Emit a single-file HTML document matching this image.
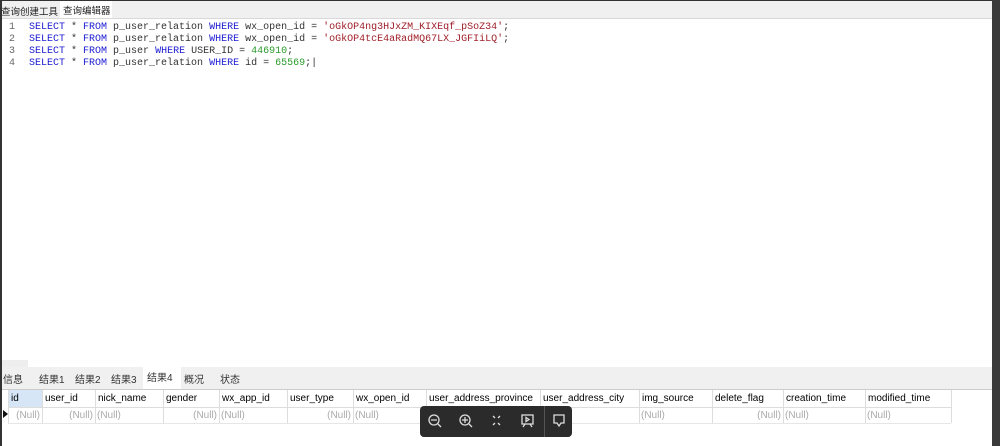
<!DOCTYPE html><html><head><meta charset="utf-8"><style>
body{margin:0;width:1000px;height:446px;overflow:hidden;background:#fff;position:relative;font-family:"Liberation Sans","Noto Sans CJK SC",sans-serif;}
.a{position:absolute}
.code{font-family:"Liberation Mono",monospace;font-size:10px;line-height:12px;color:#333;white-space:pre}
.k{color:#1a1ad0}.s{color:#a0202a}.n{color:#2a9a2a}
.tab{position:absolute;top:371px;font-size:10px;color:#333}
.h,.d{position:absolute;font-size:10px;white-space:nowrap}
.d{color:#aaa}
</style></head><body>
<div class="a" style="left:0;top:0;width:1000px;height:1px;background:#333"></div>
<div class="a" style="left:0;top:1px;width:992px;height:17px;background:#f0f0f0;border-bottom:1px solid #d8d8d8"></div>
<div class="a" style="left:60px;top:1px;width:52px;height:17px;background:#fff"></div>
<div class="a" style="left:1px;top:4px;font-size:9.5px;color:#222">查询创建工具</div>
<div class="a" style="left:63px;top:3px;font-size:9.5px;color:#222">查询编辑器</div>
<div class="a" style="left:0;top:0;width:2px;height:446px;background:#333"></div>
<div class="a" style="left:992px;top:0;width:8px;height:446px;background:#3a3a3a"></div>
<div class="a code" style="left:9px;top:22px;color:#666">1
2
3
4</div>
<div class="a code" style="left:29px;top:22px"><span class="k">SELECT</span> * <span class="k">FROM</span> p_user_relation <span class="k">WHERE</span> wx_open_id = <span class="s">'oGkOP4ng3HJxZM_KIXEqf_pSoZ34'</span>;
<span class="k">SELECT</span> * <span class="k">FROM</span> p_user_relation <span class="k">WHERE</span> wx_open_id = <span class="s">'oGkOP4tcE4aRadMQ67LX_JGFIiLQ'</span>;
<span class="k">SELECT</span> * <span class="k">FROM</span> p_user <span class="k">WHERE</span> USER_ID = <span class="n">446910</span>;
<span class="k">SELECT</span> * <span class="k">FROM</span> p_user_relation <span class="k">WHERE</span> id = <span class="n">65569</span>;|</div>
<div class="a" style="left:2px;top:360px;width:26px;height:7px;background:#eee"></div>
<div class="a" style="left:2px;top:367px;width:990px;height:22px;background:#f0f0f0;border-bottom:1px solid #ccc"></div>
<div class="a" style="left:143px;top:367px;width:38px;height:22px;background:#fff"></div>
<div class="tab" style="left:3px">信息</div><div class="tab" style="left:39px">结果1</div><div class="tab" style="left:75px">结果2</div><div class="tab" style="left:111px">结果3</div><div class="tab" style="left:147px;top:369px">结果4</div><div class="tab" style="left:184px">概况</div><div class="tab" style="left:220px">状态</div>
<div class="a" style="left:8px;top:390px;width:943px;height:33px;border-right:1px solid #ddd"></div>
<div class="a" style="left:8px;top:407px;width:943px;height:1px;background:#ddd"></div>
<div class="a" style="left:8px;top:423px;width:943px;height:1px;background:#e6e6e6"></div>
<div class="a" style="left:8px;top:390px;width:34px;height:17px;background:#d6e6f6"></div>
<div class="a" style="left:3px;top:410px;width:0;height:0;border-top:4px solid transparent;border-bottom:4px solid transparent;border-left:5px solid #111"></div>
<div id="cols"></div>
<script>
var c=[[8,"id","r"],[42,"user_id","r"],[95,"nick_name","l"],[163,"gender","r"],[219,"wx_app_id","l"],[287,"user_type","r"],[353,"wx_open_id","l"],[426,"user_address_province",""],[540,"user_address_city",""],[639,"img_source","l"],[712,"delete_flag","r"],[783,"creation_time","l"],[865,"modified_time","l"]];
var h="";for(var i=0;i<c.length;i++){var x=c[i][0],w=(i<c.length-1?c[i+1][0]:951)-x;
h+='<div class="a" style="left:'+x+'px;top:390px;width:1px;height:33px;background:#ddd"></div>';
h+='<div class="h" style="left:'+(x+3)+'px;top:393px">'+c[i][1]+'</div>';
if(c[i][2]=="r")h+='<div class="d" style="left:'+x+'px;width:'+(w-2)+'px;text-align:right;top:410px">(Null)</div>';
if(c[i][2]=="l")h+='<div class="d" style="left:'+(x+2)+'px;top:410px">(Null)</div>';}
document.getElementById("cols").innerHTML=h;
</script>
<div class="a" style="left:420px;top:406px;width:152px;height:31px;background:#2b2b2b;border-radius:4px"></div>
<div class="a" style="left:544px;top:406px;width:1px;height:31px;background:#555"></div>
<svg class="a" style="left:420px;top:406px" width="152" height="31" fill="none" stroke="#ddd" stroke-width="1.3">
<circle cx="14" cy="14" r="5"/><path d="M11 14h6M18 18l3 3"/>
<circle cx="45" cy="14" r="5"/><path d="M42 14h6M45 11v6M49 18l3 3"/>
<path d="M73 10l2 2M80 10l-2 2M73 19l2-2M80 19l-2-2" />
<rect x="102" y="9" width="11" height="9"/><path d="M106 11.5l3 2-3 2zM105 18l-2 3M110 18l2 3"/>
<path d="M134 9h10v8h-3l-2 3-2-3h-3z"/>
</svg>
</body></html>
